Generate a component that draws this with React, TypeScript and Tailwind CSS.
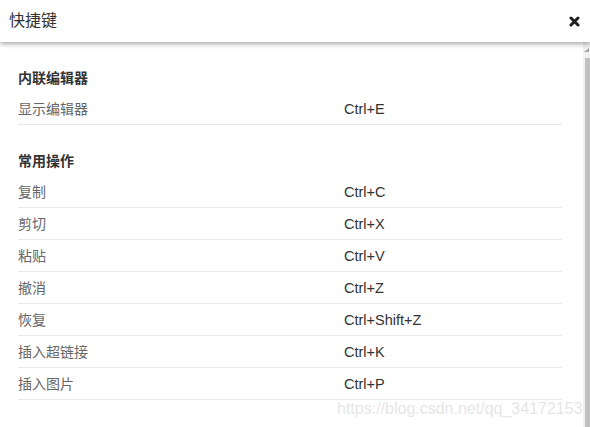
const sections: ReadonlyArray<{
  title: string
  items: ReadonlyArray<{ label: string; keys: string }>
}> = [
  {
    title: '内联编辑器',
    items: [{ label: '显示编辑器', keys: 'Ctrl+E' }],
  },
  {
    title: '常用操作',
    items: [
      { label: '复制', keys: 'Ctrl+C' },
      { label: '剪切', keys: 'Ctrl+X' },
      { label: '粘贴', keys: 'Ctrl+V' },
      { label: '撤消', keys: 'Ctrl+Z' },
      { label: '恢复', keys: 'Ctrl+Shift+Z' },
      { label: '插入超链接', keys: 'Ctrl+K' },
      { label: '插入图片', keys: 'Ctrl+P' },
    ],
  },
]

const CloseIcon = () => (
  <svg aria-hidden="true" className="size-[11px]" viewBox="0 0 11 11">
    <path
      d="M2 2 L9 9 M9 2 L2 9"
      stroke="#1f1f1f"
      strokeLinecap="round"
      strokeWidth={3}
    />
  </svg>
)

const App = () => {
  return (
    <div className="relative flex h-[427px] w-[590px] flex-col overflow-hidden bg-white font-['Liberation_Sans','Noto_Sans_CJK_SC',sans-serif]">
      <header className="relative z-10 flex h-[42px] shrink-0 items-center justify-between bg-white pl-[9px] pr-[10px] shadow-[0_2px_5px_rgba(0,0,0,0.35)]">
        <h1 className="text-[16px] font-normal text-[#333]">快捷键</h1>
        <button className="flex items-center" type="button">
          <CloseIcon />
        </button>
      </header>
      <div className="flex min-h-0 flex-1">
        <div className="flex-1 pl-[18px] pr-[21px] pt-[26px]">
          {sections.map((section, index) => (
            <section className={index > 0 ? 'mt-[26px]' : ''} key={section.title}>
              <h2 className="flex h-[20px] items-center text-[14px] font-bold text-[#333]">
                {section.title}
              </h2>
              <ul className="mt-[5px]">
                {section.items.map((item) => (
                  <li
                    className="flex h-[32px] items-center border-b border-[#e8e8e8] pt-[2px] text-[14px]"
                    key={item.label}
                  >
                    <span className="w-[326px] text-[#666]">{item.label}</span>
                    <span className="text-[14.5px] text-[#333]">{item.keys}</span>
                  </li>
                ))}
              </ul>
            </section>
          ))}
        </div>
        <div className="flex w-[7px] shrink-0 flex-col bg-[#f1f1f1]">
          <div className="flex h-[16px] items-center justify-end pr-[1px]">
            <svg aria-hidden="true" className="h-[4px] w-[5px]" viewBox="0 0 5 4">
              <path d="M0 4 L5 4 L5 0 Z" fill="#a3a3a3" />
            </svg>
          </div>
          <div className="ml-[2px] flex-1 bg-[#c1c1c1]" />
        </div>
      </div>
      <span className="pointer-events-none absolute left-[337px] top-[399px] text-[16px] leading-[20px] text-[#e6e6e6]">
        https://blog.csdn.net/qq_34172153
      </span>
    </div>
  )
}

export default App
